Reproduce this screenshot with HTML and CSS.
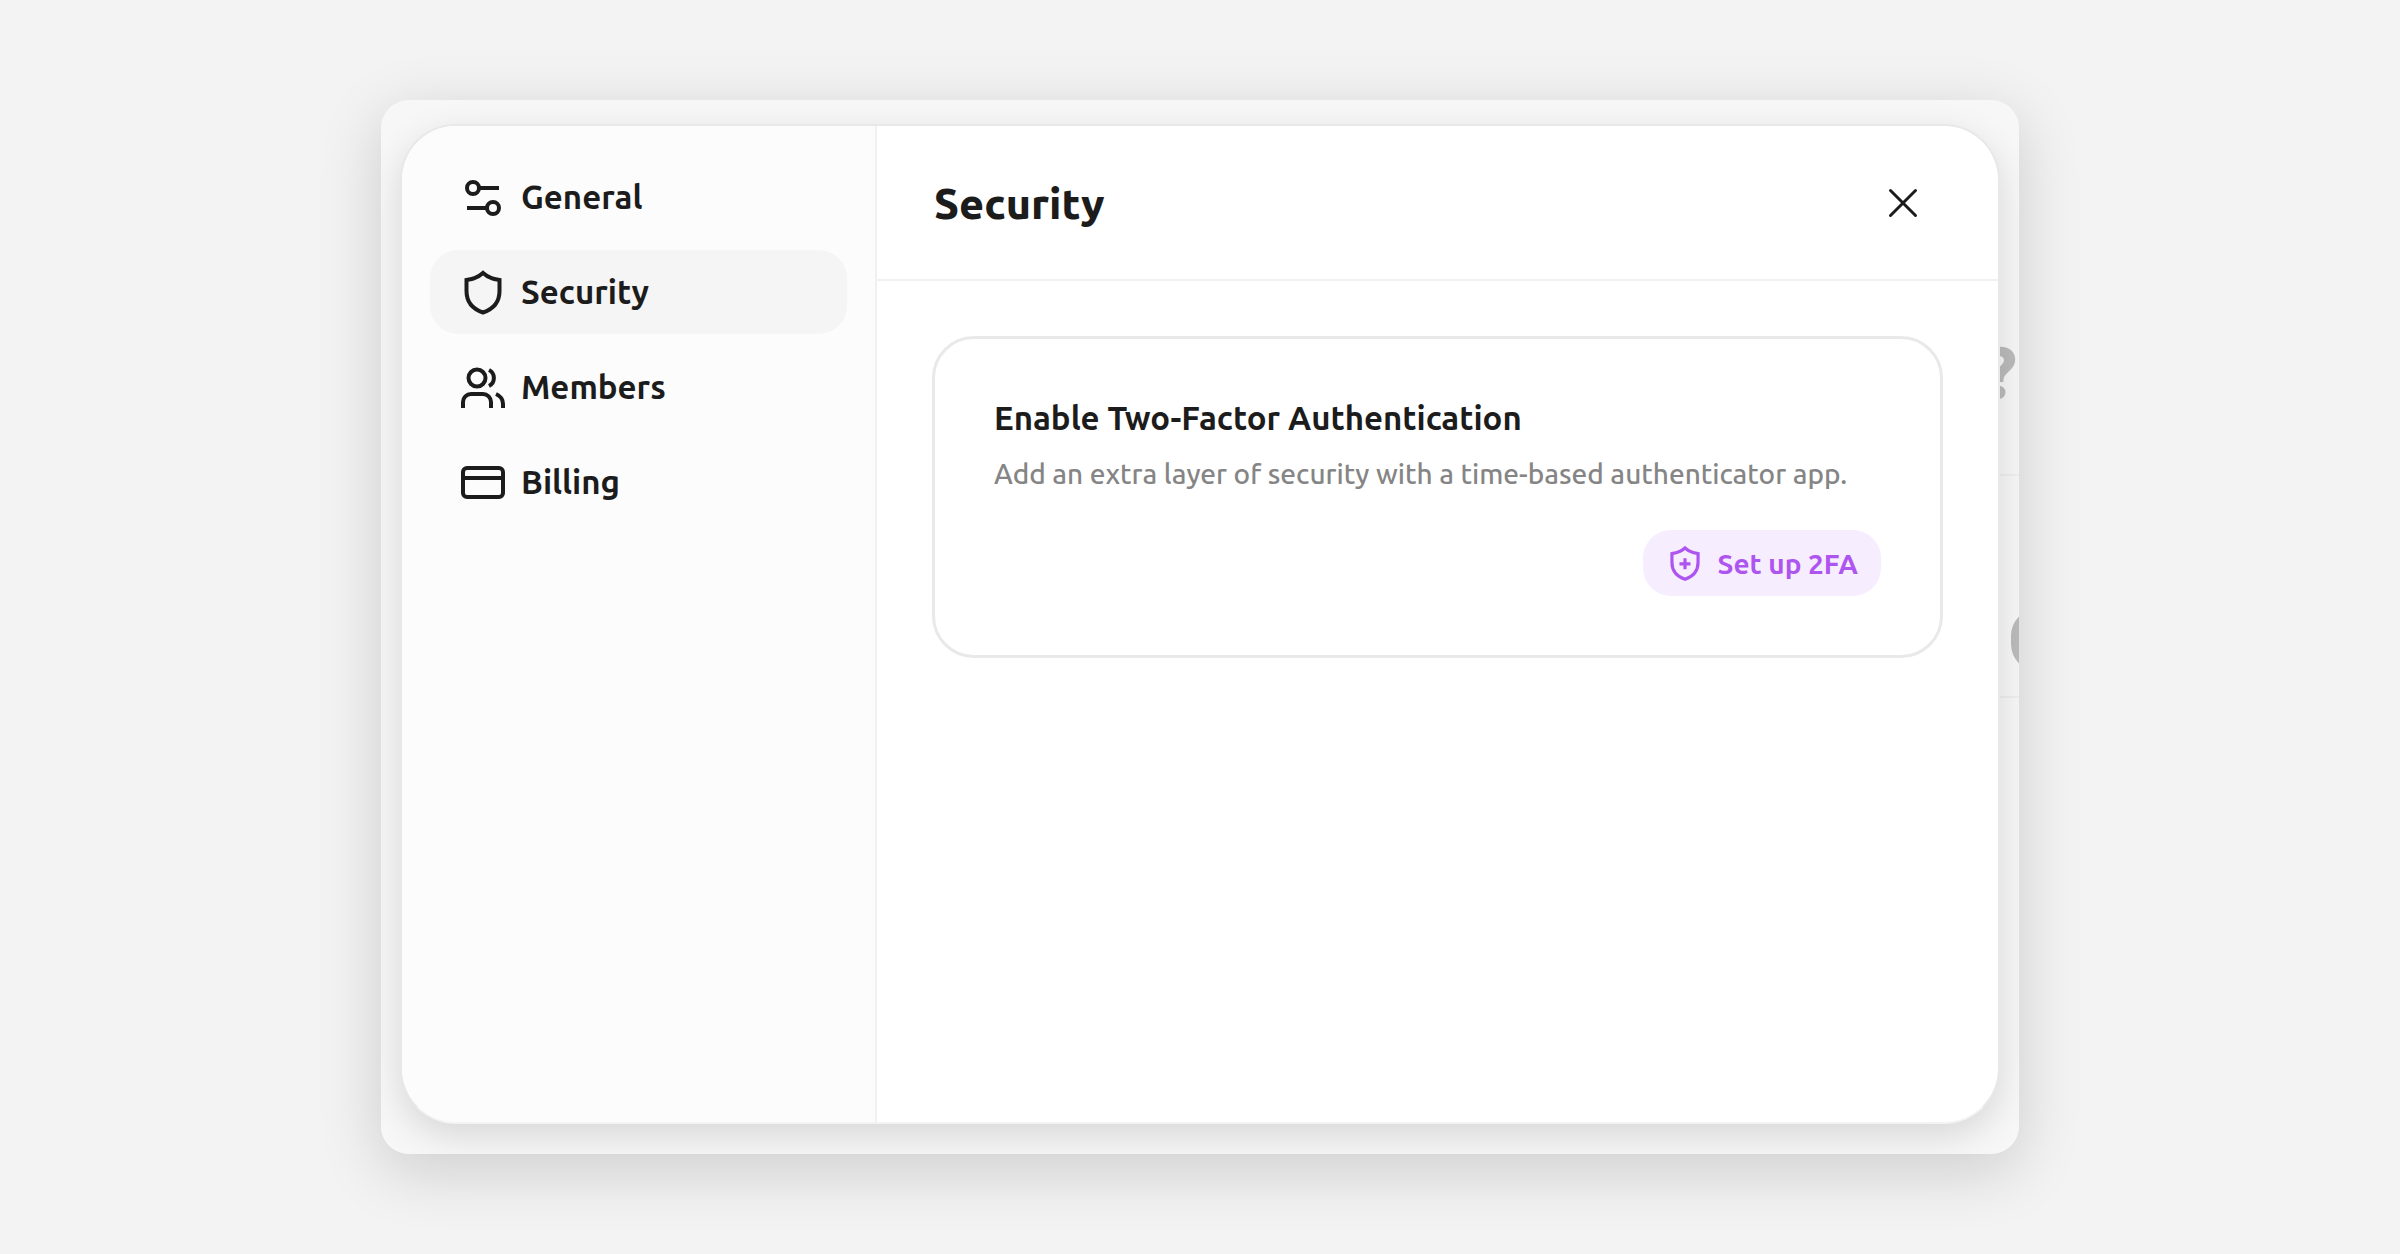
FILE: index.html
```html
<!DOCTYPE html>
<html lang="en">
<head>
    <meta charset="UTF-8">
    <meta name="viewport" content="width=device-width, initial-scale=1.0">
    <title>Security</title>
    <link rel="stylesheet" href="styles.css">
</head>
<body>
    <div class="frame">
        <!-- Page behind the dialog -->
        <div class="backdrop">
            <span class="backdrop-title">?</span>
            <span class="backdrop-row"></span>
            <span class="backdrop-button"></span>
        </div>

        <div class="dialog" role="dialog" aria-labelledby="dialogTitle">
            <nav class="sidebar">
                <a class="nav-item" href="#general">
                    <svg class="icon" viewBox="0 0 48 48">
                        <circle cx="14" cy="15" r="6"/>
                        <path d="M20 15H40M8 35H28"/>
                        <circle cx="34" cy="35" r="6"/>
                    </svg>
                    General
                </a>
                <a class="nav-item active" href="#security" aria-current="page">
                    <svg class="icon" viewBox="0 0 48 48">
                        <path d="M24 5C21 7.700 19 8.900 15.500 10.100C13 11.200 10.500 11.500 7.500 12V23C7.500 34 13.500 41 24 44.500C34.500 41 40.500 34 40.500 23V12C37.500 11.500 35 11.200 32.500 10.100C29 8.900 27 7.700 24 5Z"/>
                    </svg>
                    Security
                </a>
                <a class="nav-item" href="#members">
                    <svg class="icon" viewBox="0 0 48 48">
                        <circle cx="18" cy="15" r="8.500"/>
                        <path d="M4 45V39a8 8 0 0 1 8-8h12a8 8 0 0 1 8 8v6M30 7a9 9 0 0 1 0 16M37 31c4.500 2 7 5.500 7 10v4"/>
                    </svg>
                    Members
                </a>
                <a class="nav-item" href="#billing">
                    <svg class="icon" viewBox="0 0 48 48">
                        <rect x="4" y="10" width="40" height="29" rx="4"/>
                        <path d="M4 20H44"/>
                    </svg>
                    Billing
                </a>
            </nav>

            <main class="content">
                <header class="content-header">
                    <h1 id="dialogTitle">Security</h1>
                    <button class="close" type="button" aria-label="Close">
                        <svg class="icon" viewBox="0 0 48 48">
                            <path d="M11.500 11.500L36.500 36.500M36.500 11.500L11.500 36.500"/>
                        </svg>
                    </button>
                </header>

                <section class="card">
                    <h2>Enable Two-Factor Authentication</h2>
                    <p>Add an extra layer of security with a time-based authenticator app.</p>
                    <button class="setup" type="button">
                        <svg class="icon" viewBox="0 0 48 48">
                            <path d="M24 5C21 7.700 19 8.900 15.500 10.100C13 11.200 10.500 11.500 7.500 12V23C7.500 34 13.500 41 24 44.500C34.500 41 40.500 34 40.500 23V12C37.500 11.500 35 11.200 32.500 10.100C29 8.900 27 7.700 24 5Z"/>
                            <path d="M24 18V32M17 25H31"/>
                        </svg>
                        Set up 2FA
                    </button>
                </section>
            </main>
        </div>
    </div>
</body>
</html>
```
FILE: styles.css
```css
* {
    box-sizing: border-box;
}

body {
    margin: 0;
    padding: 100px 381px;
    background-color: #f3f3f3;
    color: #1c1c1c;
    font-family: Ubuntu, "Noto Sans", sans-serif;
}

.frame {
    position: relative;
    display: flex;
    min-height: calc(100vh - 200px);
    padding: 24px 19px 30px;
    overflow: hidden;
    background-color: #f7f7f7;
    border-radius: 28px;
}

body::before {
    content: "";
    position: absolute;
    inset: 100px 381px;
    border-radius: 28px;
    box-shadow: 0 16px 64px rgba(0, 0, 0, 0.16);
}

/* Background page */
.backdrop {
    position: absolute;
    top: 0;
    right: 0;
    bottom: 0;
    width: 40px;
    color: #bbb;
}

.backdrop-title {
    position: absolute;
    top: 224px;
    right: 2px;
    font-size: 72px;
    font-weight: 800;
    line-height: 96px;
}

.backdrop-row {
    position: absolute;
    top: 374px;
    width: 100%;
    height: 224px;
    border-top: 2px solid #eee;
    border-bottom: 2px solid #eee;
}

.backdrop-button {
    position: absolute;
    top: 508px;
    left: 32px;
    width: 80px;
    height: 64px;
    border-radius: 28px;
    background-color: #bbb;
}

/* Dialog */
.dialog {
    position: relative;
    display: flex;
    flex: 1;
    overflow: hidden;
    background-color: #fff;
    border: 2px solid #e8e8e8;
    border-bottom-color: #f3f3f3;
    border-radius: 56px;
    box-shadow: 0 12px 36px rgba(0, 0, 0, 0.13);
}

.sidebar {
    display: flex;
    flex-direction: column;
    gap: 11px;
    width: 475px;
    padding: 29px 28px;
    background-color: #fcfcfc;
    border-right: 2px solid #f1f1f1;
}

.nav-item {
    display: flex;
    align-items: center;
    gap: 14px;
    height: 84px;
    padding: 0 29px;
    border-radius: 28px;
    color: inherit;
    font-size: 33px;
    font-weight: 600;
    line-height: 36px;
    text-decoration: none;
}

.nav-item.active {
    background-color: #f5f5f5;
}

.icon {
    flex: none;
    width: 48px;
    height: 48px;
    fill: none;
    stroke: currentColor;
    stroke-width: 4;
}

.content {
    flex: 1;
}

.content-header {
    display: flex;
    align-items: center;
    justify-content: space-between;
    height: 155px;
    padding: 0 71px 0 57px;
    border-bottom: 2px solid #f1f1f1;
}

h1 {
    margin: 0;
    font-size: 43px;
    font-weight: 800;
}

button {
    border: 0;
    font-family: inherit;
    cursor: pointer;
}

.close {
    display: flex;
    padding: 0;
    background: none;
    color: inherit;
}

.close .icon {
    stroke-linecap: round;
    stroke-width: 3;
}

.card {
    display: flex;
    flex-direction: column;
    margin: 55px;
    padding: 55px 59px 59px;
    border: 3px solid #e9e9e9;
    border-radius: 42px;
}

h2 {
    margin: 0;
    font-size: 33px;
    font-weight: 600;
    line-height: 48px;
}

p {
    margin: 12px 0 36px;
    color: #858585;
    font-size: 28px;
    font-weight: 500;
    line-height: 40px;
}

.setup {
    display: flex;
    align-items: center;
    align-self: flex-end;
    gap: 14px;
    height: 66px;
    padding: 0 23px;
    border-radius: 28px;
    background-color: #f6edff;
    color: #ae55f0;
    font-size: 28px;
    font-weight: 600;
}

.setup .icon {
    width: 38px;
    height: 38px;
}
```
